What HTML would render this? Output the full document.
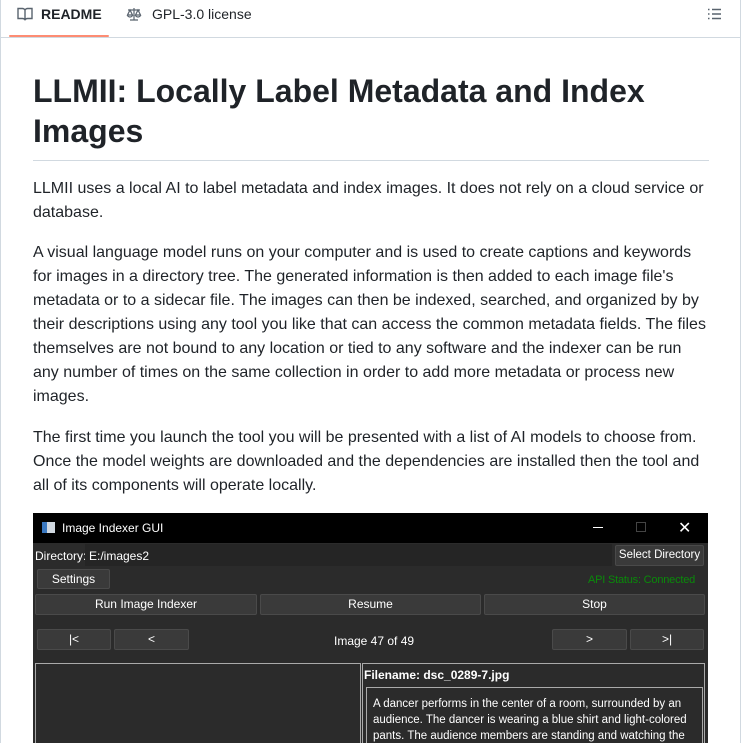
<!DOCTYPE html>
<html><head><meta charset="utf-8"><style>
*{margin:0;padding:0;box-sizing:border-box}
body{width:741px;height:743px;overflow:hidden;background:#fff;font-family:"Liberation Sans",sans-serif;color:#1f2328;position:relative}
.frame{position:absolute;left:0;top:0;width:741px;height:743px;border-left:1px solid #d1d9e0;border-right:1px solid #d1d9e0}
.tabs{position:absolute;left:0;top:0;width:741px;height:38px;border-bottom:1px solid #d1d9e0}
.tab{position:absolute;top:6px;font-size:14px;line-height:16px}
.ul{position:absolute;left:9px;top:35px;width:100px;height:2px;background:#fd8c73;border-radius:2px}
h1{position:absolute;left:33px;top:71px;width:676px;font-size:32px;line-height:40px;font-weight:bold;padding-bottom:9px;border-bottom:1px solid #d1d9e0}
p{position:absolute;left:33px;width:676px;font-size:16px;line-height:24px}
.win{position:absolute;left:33px;top:513px;width:675px;height:230px;background:#2b2b2b;overflow:hidden;font-family:"Liberation Sans",sans-serif;font-size:12px;color:#fff}
.tb{position:absolute;left:0;top:0;width:675px;height:30px;background:#000}
.b{position:absolute;background:#3a3a3a;border:1px solid #4a4a4a;border-radius:2px;color:#fff;text-align:center;font-size:12px;line-height:19px}
.abs{position:absolute;white-space:nowrap}
</style></head><body>
<div class="frame"></div>
<div class="tabs">
 <svg class="abs" style="left:17px;top:7px" width="16" height="14" viewBox="0 0 16 14"><path d="M1 1.5h4.5c1.2 0 2 .8 2.5 1.5.5-.7 1.3-1.5 2.5-1.5H15v10h-4.5c-1.2 0-2 .5-2.5 1.2-.5-.7-1.3-1.2-2.5-1.2H1z M8 3v9.5" fill="none" stroke="#59636e" stroke-width="1.4"/></svg>
 <div class="tab" style="left:41px;font-weight:bold">README</div>
 <svg class="abs" style="left:126px;top:7px" width="16" height="14" viewBox="0 0 16 14"><path d="M8 1v12M4 13h8M2 3h12M4 3l-2.5 5h5zM12 3l-2.5 5h5zM1.5 8a2.5 2 0 0 0 5 0M9.5 8a2.5 2 0 0 0 5 0" fill="none" stroke="#59636e" stroke-width="1.2"/></svg>
 <div class="tab" style="left:152px;color:#1f2328">GPL-3.0 license</div>
 <svg class="abs" style="left:707px;top:7px" width="16" height="14" viewBox="0 0 16 14"><path d="M1 2.5h1.5M1 7h1.5M1 11.5h1.5M5 2.5h9M5 7h9M5 11.5h9" stroke="#59636e" stroke-width="1.5"/></svg>
 <div class="ul"></div>
</div>
<h1>LLMII: Locally Label Metadata and Index Images</h1>
<p style="top:177px">LLMII uses a local AI to label metadata and index images. It does not rely on a cloud service or database.</p>
<p style="top:241px">A visual language model runs on your computer and is used to create captions and keywords for images in a directory tree. The generated information is then added to each image file's metadata or to a sidecar file. The images can then be indexed, searched, and organized by by their descriptions using any tool you like that can access the common metadata fields. The files themselves are not bound to any location or tied to any software and the indexer can be run<br>any number of times on the same collection in order to add more metadata or process new<br>images.</p>
<p style="top:426px">The first time you launch the tool you will be presented with a list of AI models to choose from. Once the model weights are downloaded and the dependencies are installed then the tool and all of its components will operate locally.</p>
<div class="win">
 <div class="tb">
  <div class="abs" style="left:9px;top:9px;width:13px;height:11px;background:#d0d8e0;border-left:5px solid #3a78c0"></div>
  <div class="abs" style="left:29px;top:8px;font-size:12px">Image Indexer GUI</div>
  <div class="abs" style="left:560px;top:14px;width:10px;height:1px;background:#fff"></div>
  <div class="abs" style="left:603px;top:9px;width:10px;height:10px;border:1px solid #444"></div>
  <div class="abs" style="left:645px;top:5px;font-size:16px">✕</div>
 </div>
 <div class="abs" style="left:2px;top:36px">Directory:</div>
 <div class="abs" style="left:52px;top:31px;width:527px;height:22px;background:#252525"></div>
 <div class="abs" style="left:56px;top:36px">E:/images2</div>
 <div class="b" style="left:582px;top:32px;width:89px;height:21px;font-size:11.5px">Select Directory</div>
 <div class="b" style="left:4px;top:56px;width:73px;height:20px">Settings</div>
 <div class="abs" style="left:555px;top:61px;color:#0a8a0a;font-size:11px;letter-spacing:-0.2px">API Status: Connected</div>
 <div class="b" style="left:2px;top:81px;width:222px;height:21px">Run Image Indexer</div>
 <div class="b" style="left:227px;top:81px;width:221px;height:21px">Resume</div>
 <div class="b" style="left:451px;top:81px;width:221px;height:21px">Stop</div>
 <div class="b" style="left:4px;top:116px;width:74px;height:21px">|&lt;</div>
 <div class="b" style="left:81px;top:116px;width:75px;height:21px">&lt;</div>
 <div class="abs" style="left:301px;top:121px">Image 47 of 49</div>
 <div class="b" style="left:519px;top:116px;width:75px;height:21px">&gt;</div>
 <div class="b" style="left:597px;top:116px;width:74px;height:21px">&gt;|</div>
 <div class="abs" style="left:2px;top:150px;width:326px;height:90px;border:1px solid #aaa"></div>
 <div class="abs" style="left:329px;top:150px;width:343px;height:90px;border:1px solid #aaa"></div>
 <div class="abs" style="left:331px;top:155px;font-weight:bold">Filename: dsc_0289-7.jpg</div>
 <div class="abs" style="left:333px;top:174px;width:337px;height:70px;border:1px solid #aaa;padding:8px 6px;font-size:11.5px;line-height:16px;white-space:normal">A dancer performs in the center of a room, surrounded by an audience. The dancer is wearing a blue shirt and light-colored pants. The audience members are standing and watching the</div>
</div>
</body></html>
